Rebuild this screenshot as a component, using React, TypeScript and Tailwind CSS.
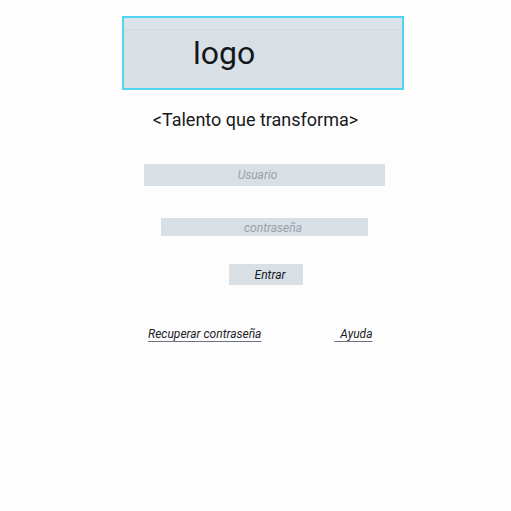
import React from "react";

export default function App() {
  return (
    <div className="w-[511px] h-[511px] bg-[#fdfdfd] font-['Roboto',sans-serif] flex flex-col">
      {/* Logo placeholder */}
      <div className="ml-[122px] mt-[16px] w-[282px] h-[74px] border-2 border-[#4fd5f2] bg-[#d8e0e6] flex flex-col">
        <div className="h-[12px] bg-[#dbe2e8] border-b border-[#d2dbe4]" />
        <div className="flex-1 flex items-start pl-[69px] pt-[4px]">
          <span className="text-[32px] leading-[38px] text-[#14181d]">logo</span>
        </div>
      </div>

      <p className="mt-[18px] text-center text-[18px] leading-[24px] text-[#161a20]">
        &lt;Talento que transforma&gt;
      </p>

      <div className="ml-[144px] mt-[32px] w-[241px] h-[22px] bg-[#d8dfe5] flex items-center justify-center">
        <span className="italic text-[12px] text-[#9aa2aa] -ml-[14px]">Usuario</span>
      </div>

      <div className="ml-[161px] mt-[32px] w-[207px] h-[18px] bg-[#d8dfe5] flex items-center justify-center">
        <span className="italic text-[12px] text-[#9aa2aa] pl-[17px] pt-[1px]">contraseña</span>
      </div>

      <div className="ml-[229px] mt-[28px] w-[74px] h-[21px] bg-[#d8dfe5] flex items-center justify-center">
        <span className="italic text-[12px] text-[#15191f] pl-[8px]">Entrar</span>
      </div>

      <div className="mt-[40px] flex items-center">
        <span className="ml-[148px] italic text-[12px] text-[#1a1e28] underline decoration-[#6b7280] underline-offset-[3px]">
          Recuperar contraseña
        </span>
        <span className="ml-[73px] italic text-[12px] text-[#1a1e28] underline decoration-[#6b7280] underline-offset-[3px] whitespace-pre">
          {"  Ayuda"}
        </span>
      </div>
    </div>
  );
}
